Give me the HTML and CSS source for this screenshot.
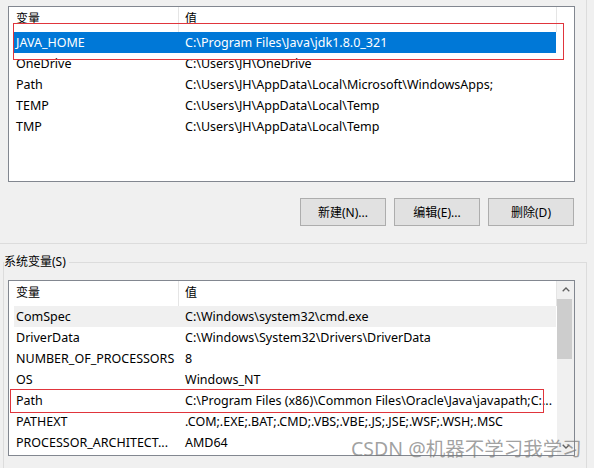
FILE: index.html
```
<!DOCTYPE html>
<html lang="zh-CN">
<head>
<meta charset="utf-8">
<title>环境变量</title>
<link rel="stylesheet" href="styles.css">
</head>
<body>
<section class="group group-user">
  <div class="listview">
    <div class="lv-main">
      <div class="lv-header"><div class="hcell c1">变量</div><div class="hcell c2">值</div></div>
      <div class="lv-row selected"><div class="cell c1">JAVA_HOME</div><div class="cell c2">C:\Program Files\Java\jdk1.8.0_321</div></div>
      <div class="lv-row"><div class="cell c1">OneDrive</div><div class="cell c2">C:\Users\JH\OneDrive</div></div>
      <div class="lv-row"><div class="cell c1">Path</div><div class="cell c2">C:\Users\JH\AppData\Local\Microsoft\WindowsApps;</div></div>
      <div class="lv-row"><div class="cell c1">TEMP</div><div class="cell c2">C:\Users\JH\AppData\Local\Temp</div></div>
      <div class="lv-row"><div class="cell c1">TMP</div><div class="cell c2">C:\Users\JH\AppData\Local\Temp</div></div>
    </div>
    <div class="lv-gutter"></div>
  </div>
  <div class="mark mark-user"></div>
  <div class="buttons">
    <button class="btn">新建(N)...</button>
    <button class="btn">编辑(E)...</button>
    <button class="btn">删除(D)</button>
  </div>
</section>

<fieldset class="group group-sys">
  <legend>系统变量(S)</legend>
  <div class="listview">
    <div class="lv-main">
      <div class="lv-header"><div class="hcell c1">变量</div><div class="hcell c2">值</div></div>
      <div class="lv-row hover"><div class="cell c1">ComSpec</div><div class="cell c2">C:\Windows\system32\cmd.exe</div></div>
      <div class="lv-row"><div class="cell c1">DriverData</div><div class="cell c2">C:\Windows\System32\Drivers\DriverData</div></div>
      <div class="lv-row"><div class="cell c1">NUMBER_OF_PROCESSORS</div><div class="cell c2">8</div></div>
      <div class="lv-row"><div class="cell c1">OS</div><div class="cell c2">Windows_NT</div></div>
      <div class="lv-row"><div class="cell c1">Path</div><div class="cell c2">C:\Program Files (x86)\Common Files\Oracle\Java\javapath;C:...</div></div>
      <div class="lv-row"><div class="cell c1">PATHEXT</div><div class="cell c2">.COM;.EXE;.BAT;.CMD;.VBS;.VBE;.JS;.JSE;.WSF;.WSH;.MSC</div></div>
      <div class="lv-row"><div class="cell c1">PROCESSOR_ARCHITECT...</div><div class="cell c2">AMD64</div></div>
    </div>
    <div class="scrollbar">
      <div class="sb-btn"><svg width="8" height="5" viewBox="0 0 8 5"><path d="M0.7 4.3 L4 1 L7.3 4.3" fill="none" stroke="#606060" stroke-width="1.3"/></svg></div>
      <div class="sb-track"><div class="sb-thumb"></div></div>
      <div class="sb-btn"><svg width="8" height="5" viewBox="0 0 8 5"><path d="M0.7 0.7 L4 4 L7.3 0.7" fill="none" stroke="#606060" stroke-width="1.3"/></svg></div>
    </div>
    <div class="mark mark-sys"></div>
  </div>
</fieldset>

<div class="watermark">CSDN @机器不学习我学习</div>
</body>
</html>
```

FILE: styles.css
```
html, body {
  margin: 0;
  padding: 0;
}
body {
  width: 594px;
  height: 468px;
  overflow: hidden;
  background: #f0f0f0;
  font-family: "Noto Sans", "Noto Sans CJK SC", sans-serif;
  font-size: 12.5px;
  color: #000;
  position: relative;
}

.group-user {
  position: relative;
  box-sizing: border-box;
  width: 587px;
  height: 244px;
  padding-top: 6px;
  border-right: 1px solid #dcdcdc;
  border-bottom: 1px solid #dcdcdc;
}

.listview {
  position: relative;
  box-sizing: border-box;
  width: 567px;
  height: 176px;
  border: 1px solid #828790;
  background: #fff;
  display: flex;
}
.group-user .listview {
  margin-left: 8px;
}

.lv-main {
  width: 548px;
  overflow: hidden;
  flex: none;
}
.lv-gutter {
  width: 17px;
  flex: none;
}

.lv-header {
  display: flex;
  height: 25px;
  line-height: 24px;
}
.hcell {
  box-sizing: border-box;
  border-right: 1px solid #e5e5e5;
  white-space: nowrap;
  font-size: 12px;
}
.hcell.c1 {
  width: 170px;
  padding-left: 7px;
}
.hcell.c2 {
  width: 378px;
  padding-left: 6px;
}

.lv-row {
  display: flex;
  margin-left: 5px;
  width: 542px;
  height: 21px;
  line-height: 21px;
  white-space: nowrap;
}
.cell {
  box-sizing: border-box;
  overflow: hidden;
}
.cell.c1 {
  width: 164px;
  flex: none;
  padding-left: 2px;
}
.cell.c2 {
  flex: 1;
  padding-left: 7px;
}
.lv-row.selected {
  background: #0078d7;
  color: #fff;
}
.lv-row.hover {
  background: #f0f0f0;
}

.mark {
  position: absolute;
  z-index: 2;
  border: 1px solid #e0353c;
  box-sizing: border-box;
  pointer-events: none;
}
.mark-user {
  left: 13px;
  top: 23px;
  width: 551px;
  height: 37px;
}
.mark-sys {
  left: 1px;
  top: 108px;
  width: 534px;
  height: 24px;
}

.buttons {
  display: flex;
  justify-content: flex-end;
  gap: 8px;
  margin-top: 16px;
  padding-right: 12px;
}
.btn {
  box-sizing: border-box;
  width: 86px;
  height: 28px;
  border: 1px solid #adadad;
  background: #e1e1e1;
  font-family: "Noto Sans", "Noto Sans CJK SC", sans-serif;
  font-size: 12px;
  color: #000;
  padding: 0;
}

.group-sys {
  box-sizing: border-box;
  margin: 10px 0 0 3px;
  padding: 0;
  width: 584px;
  height: 214px;
  border: 1px solid #dcdcdc;
  border-bottom: none;
  min-width: 0;
}
.group-sys legend {
  padding: 0 3px 0 0;
  margin: 0;
  line-height: 16px;
  font-size: 12px;
}
.group-sys .listview {
  margin: 10px 0 0 4px;
}

.scrollbar {
  width: 17px;
  flex: none;
  background: #f0f0f0;
  display: flex;
  flex-direction: column;
}
.sb-btn {
  height: 17px;
  display: flex;
  align-items: center;
  justify-content: center;
}
.sb-track {
  flex: 1;
  padding-top: 1px;
}
.sb-thumb {
  width: 15px;
  height: 60px;
  background: #cdcdcd;
}

.watermark {
  position: absolute;
  left: 351px;
  top: 436px;
  font-size: 19.5px;
  line-height: 26px;
  color: rgba(120, 120, 120, 0.7);
  white-space: nowrap;
  font-family: "Noto Sans", "Noto Sans CJK SC", sans-serif;
  pointer-events: none;
}
```
